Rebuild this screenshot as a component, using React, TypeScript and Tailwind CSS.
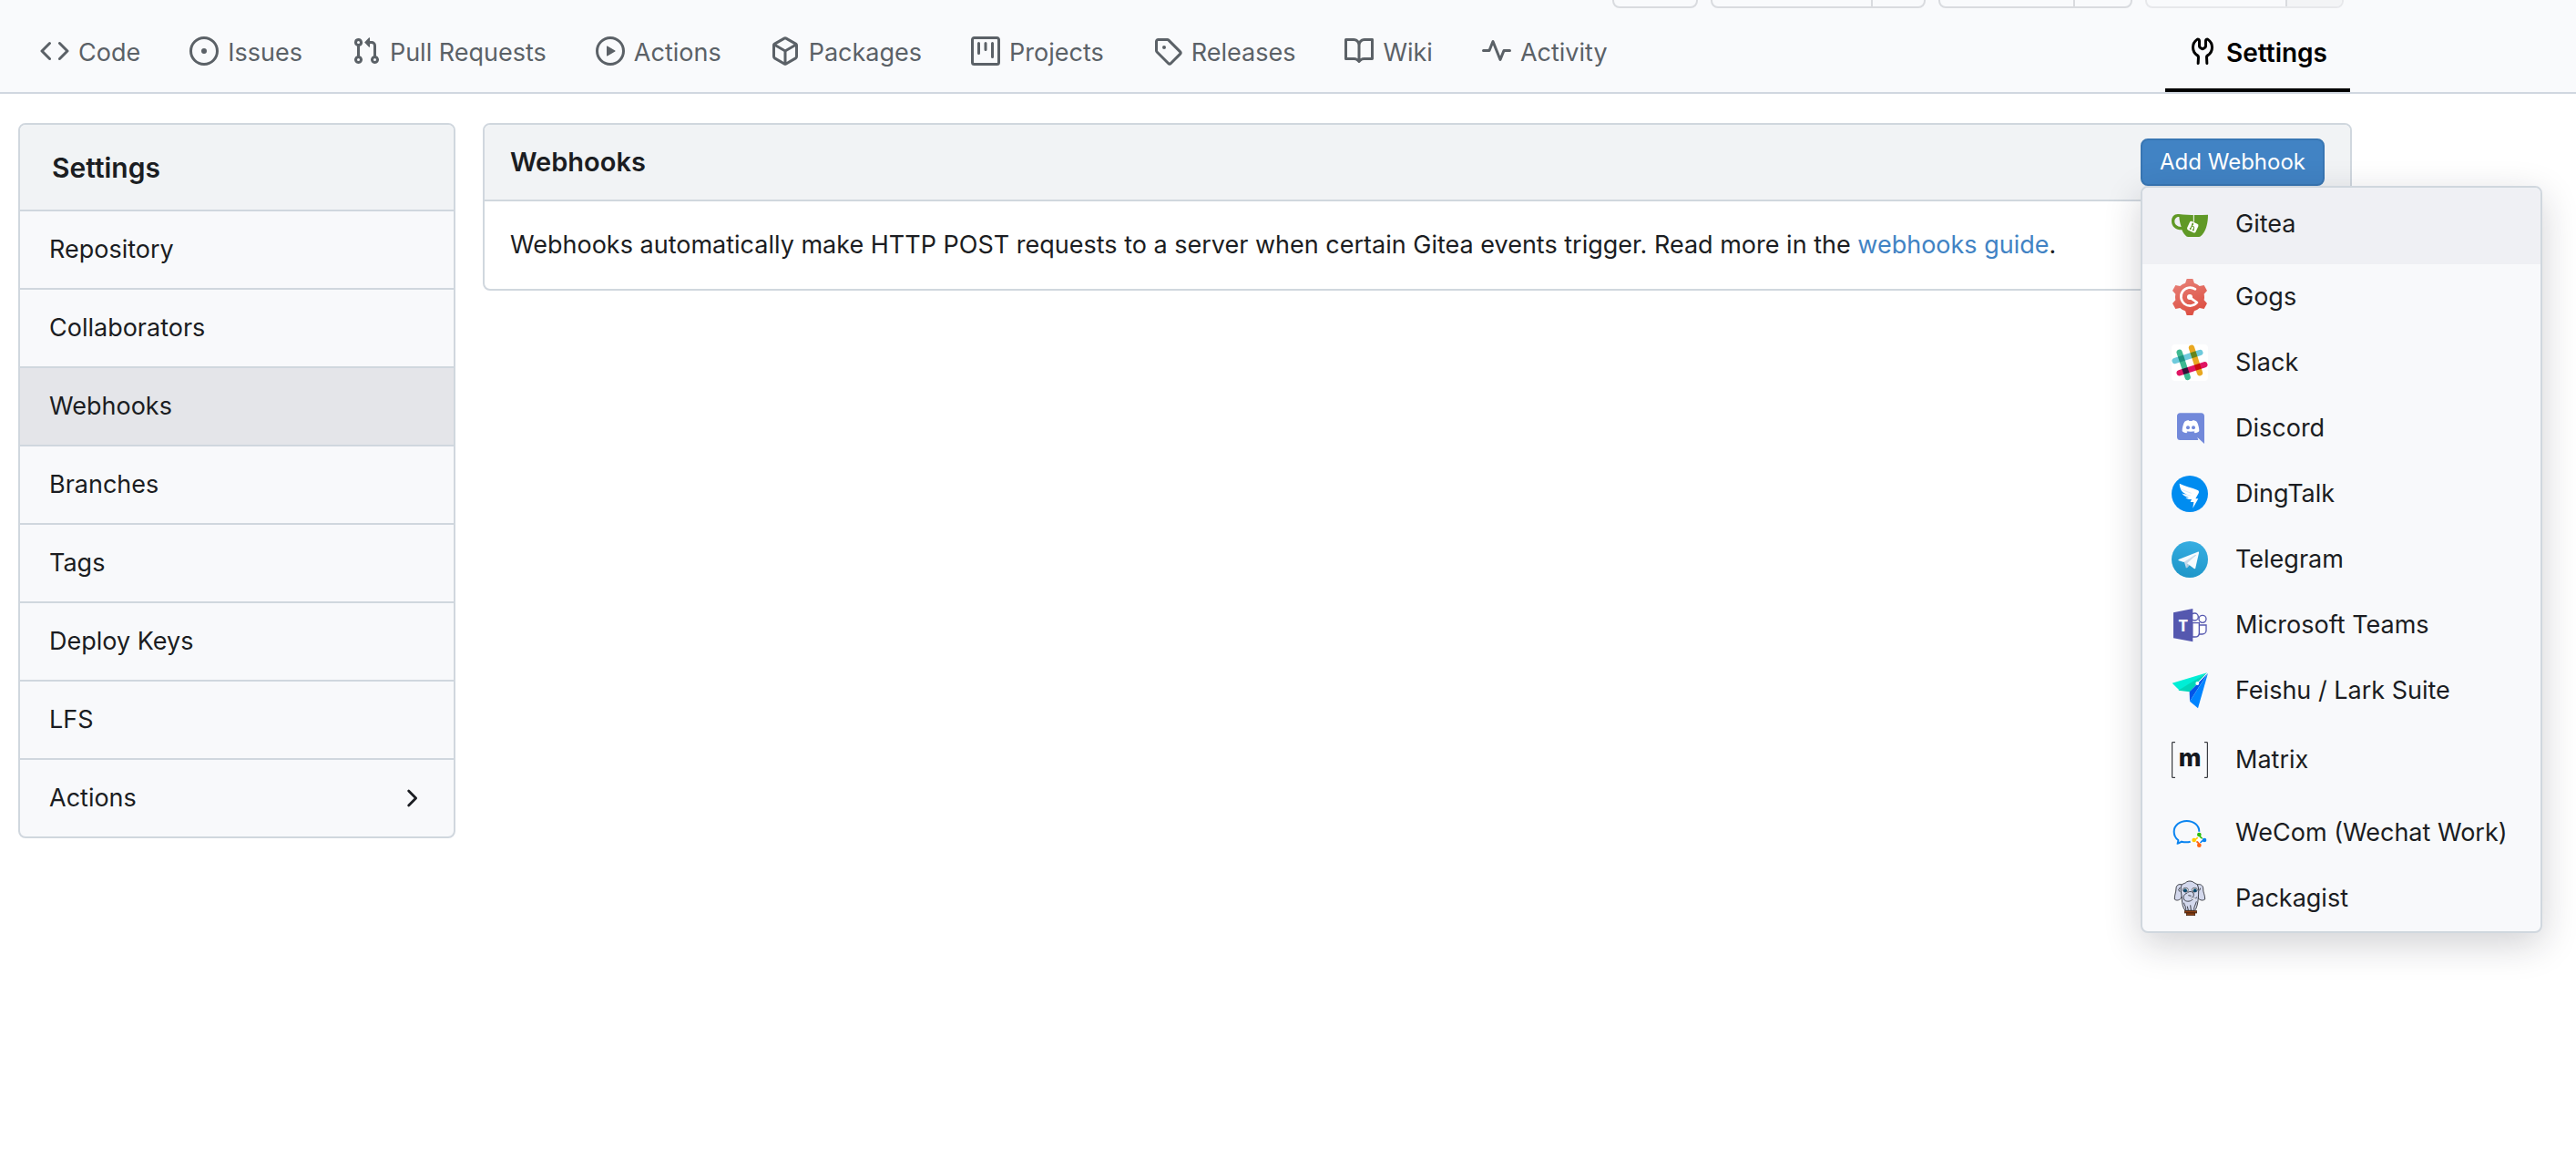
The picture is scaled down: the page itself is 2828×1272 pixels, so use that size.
import type { ReactNode } from "react";

const tabs: { label: string; path: string }[] = [
  {
    label: "Code",
    path: "m11.28 3.22 4.25 4.25a.75.75 0 0 1 0 1.06l-4.25 4.25a.749.749 0 0 1-1.275-.326.749.749 0 0 1 .215-.734L13.94 8l-3.72-3.72a.749.749 0 0 1 .326-1.275.749.749 0 0 1 .734.215Zm-6.56 0a.751.751 0 0 1 1.042.018.751.751 0 0 1 .018 1.042L2.06 8l3.72 3.72a.749.749 0 0 1-.326 1.275.749.749 0 0 1-.734-.215L.47 8.53a.75.75 0 0 1 0-1.06Z",
  },
  {
    label: "Issues",
    path: "M8 9.5a1.5 1.5 0 1 0 0-3 1.5 1.5 0 0 0 0 3Z M8 0a8 8 0 1 1 0 16A8 8 0 0 1 8 0ZM1.5 8a6.5 6.5 0 1 0 13 0 6.5 6.5 0 0 0-13 0Z",
  },
  {
    label: "Pull Requests",
    path: "M1.5 3.25a2.25 2.25 0 1 1 3 2.122v5.256a2.251 2.251 0 1 1-1.5 0V5.372A2.25 2.25 0 0 1 1.5 3.25Zm5.677-.177L9.573.677A.25.25 0 0 1 10 .854V2.5h1A2.5 2.5 0 0 1 13.5 5v5.628a2.251 2.251 0 1 1-1.5 0V5a1 1 0 0 0-1-1h-1v1.646a.25.25 0 0 1-.427.177L7.177 3.427a.25.25 0 0 1 0-.354ZM3.75 2.5a.75.75 0 1 0 0 1.5.75.75 0 0 0 0-1.5Zm0 9.5a.75.75 0 1 0 0 1.5.75.75 0 0 0 0-1.5Zm8.25.75a.75.75 0 1 0 1.5 0 .75.75 0 0 0-1.5 0Z",
  },
  {
    label: "Actions",
    path: "M8 0a8 8 0 1 1 0 16A8 8 0 0 1 8 0ZM1.5 8a6.5 6.5 0 1 0 13 0 6.5 6.5 0 0 0-13 0Zm4.879-2.773 4.264 2.559a.25.25 0 0 1 0 .428l-4.264 2.559A.25.25 0 0 1 6 10.559V5.442a.25.25 0 0 1 .379-.215Z",
  },
  {
    label: "Packages",
    path: "m8.878.392 5.25 3.045c.54.314.872.89.872 1.514v6.098a1.75 1.75 0 0 1-.872 1.514l-5.25 3.045a1.75 1.75 0 0 1-1.756 0l-5.25-3.045A1.75 1.75 0 0 1 1 11.049V4.951c0-.624.332-1.201.872-1.514L7.122.392a1.75 1.75 0 0 1 1.756 0ZM7.875 1.69l-4.63 2.685L8 7.133l4.755-2.758-4.63-2.685a.248.248 0 0 0-.25 0ZM2.5 5.677v5.372c0 .09.047.171.125.216l4.625 2.683V8.432Zm6.25 8.271 4.625-2.683a.25.25 0 0 0 .125-.216V5.677L8.75 8.432Z",
  },
  {
    label: "Projects",
    path: "M1.75 0h12.5C15.216 0 16 .784 16 1.75v12.5A1.75 1.75 0 0 1 14.25 16H1.75A1.75 1.75 0 0 1 0 14.25V1.75C0 .784.784 0 1.75 0ZM1.5 1.75v12.5c0 .138.112.25.25.25h12.5a.25.25 0 0 0 .25-.25V1.75a.25.25 0 0 0-.25-.25H1.75a.25.25 0 0 0-.25.25ZM11.75 3a.75.75 0 0 1 .75.75v7.5a.75.75 0 0 1-1.5 0v-7.5a.75.75 0 0 1 .75-.75Zm-8.25.75a.75.75 0 0 1 1.5 0v5.5a.75.75 0 0 1-1.5 0ZM8 3a.75.75 0 0 1 .75.75v3.5a.75.75 0 0 1-1.5 0v-3.5A.75.75 0 0 1 8 3Z",
  },
  {
    label: "Releases",
    path: "M1 7.775V2.75C1 1.784 1.784 1 2.75 1h5.025c.464 0 .91.184 1.238.513l6.25 6.25a1.75 1.75 0 0 1 0 2.474l-5.026 5.026a1.75 1.75 0 0 1-2.474 0l-6.25-6.25A1.752 1.752 0 0 1 1 7.775Zm1.5 0c0 .066.026.13.073.177l6.25 6.25a.25.25 0 0 0 .354 0l5.025-5.025a.25.25 0 0 0 0-.354l-6.25-6.25a.25.25 0 0 0-.177-.073H2.75a.25.25 0 0 0-.25.25ZM6 5a1 1 0 1 1 0 2 1 1 0 0 1 0-2Z",
  },
  {
    label: "Wiki",
    path: "M0 1.75A.75.75 0 0 1 .75 1h4.253c1.227 0 2.317.59 3 1.501A3.743 3.743 0 0 1 11.006 1h4.245a.75.75 0 0 1 .75.75v10.5a.75.75 0 0 1-.75.75h-4.507a2.25 2.25 0 0 0-1.591.659l-.622.621a.75.75 0 0 1-1.06 0l-.622-.621A2.25 2.25 0 0 0 5.258 13H.75a.75.75 0 0 1-.75-.75Zm7.251 10.324.004-5.073-.002-2.253A2.25 2.25 0 0 0 5.003 2.5H1.5v9h3.757a3.75 3.75 0 0 1 1.994.574ZM8.755 4.75l-.004 7.322a3.752 3.752 0 0 1 1.992-.572H14.5v-9h-3.495a2.25 2.25 0 0 0-2.25 2.25Z",
  },
  {
    label: "Activity",
    path: "M6 2c.306 0 .582.187.696.471L10 10.731l1.304-3.26A.751.751 0 0 1 12 7h3.25a.75.75 0 0 1 0 1.5h-2.742l-1.812 4.528a.751.751 0 0 1-1.392 0L6 4.77 4.696 8.03A.75.75 0 0 1 4 8.5H.75a.75.75 0 0 1 0-1.5h2.742l1.812-4.529A.751.751 0 0 1 6 2Z",
  },
];

const toolsPath =
  "M5.433 2.304A4.492 4.492 0 0 0 3.5 6c0 1.598.832 3.002 2.09 3.802.518.328.929.923.902 1.64v.008l-.164 3.337a.75.75 0 1 1-1.498-.073l.163-3.33c.002-.085-.05-.216-.207-.316A5.996 5.996 0 0 1 2 6a5.993 5.993 0 0 1 2.567-4.92 1.482 1.482 0 0 1 1.673-.04c.462.296.76.827.76 1.423v2.82c0 .082.041.16.11.206l.75.51a.25.25 0 0 0 .28 0l.75-.51A.249.249 0 0 0 9 5.282V2.463c0-.596.298-1.127.76-1.423a1.482 1.482 0 0 1 1.673.04A5.993 5.993 0 0 1 14 6a5.996 5.996 0 0 1-2.786 5.068c-.157.1-.209.23-.207.315l.163 3.33a.752.752 0 0 1-1.094.714.75.75 0 0 1-.404-.64l-.164-3.345c-.027-.717.384-1.312.902-1.64A4.495 4.495 0 0 0 12.5 6a4.492 4.492 0 0 0-1.933-3.696c-.024.017-.067.067-.067.159v2.82a1.75 1.75 0 0 1-.767 1.448l-.75.51a1.75 1.75 0 0 1-1.966 0l-.75-.51A1.75 1.75 0 0 1 5.5 5.283V2.463c0-.092-.043-.142-.067-.159Z";

const chevronPath =
  "M6.22 3.22a.75.75 0 0 1 1.06 0l4.25 4.25a.75.75 0 0 1 0 1.06l-4.25 4.25a.751.751 0 0 1-1.042-.018.751.751 0 0 1-.018-1.042L9.94 8 6.22 4.28a.75.75 0 0 1 0-1.06Z";

function Octicon({ path, className }: { path: string; className: string }) {
  return (
    <svg viewBox="0 0 16 16" fill="currentColor" className={className} aria-hidden="true">
      <path d={path} />
    </svg>
  );
}

function Brand({ children }: { children: ReactNode }) {
  return (
    <svg viewBox="0 0 120 120" className="size-10 shrink-0" aria-hidden="true">
      {children}
    </svg>
  );
}

const gearTeeth = [0, 60, 120, 180, 240, 300];

const hooks: { label: string; tall?: boolean; active?: boolean; icon: ReactNode }[] = [
  {
    label: "Gitea",
    tall: true,
    active: true,
    icon: (
      <Brand>
        <path
          fill="#609926"
          fillRule="evenodd"
          d="M24 27C10 25 0 34 0 50c0 18 14 29 34 29 5 12 13 22 20 23h36c5 0 10-5 14-11 10-14 16-35 16-62-30 2-66 2-96-2Zm1 9c1 12 3 22 7 33C18 68 10 61 10 51c0-9 6-15 15-15Z"
        />
        <path d="M73 29v24" stroke="#fff" strokeWidth="3" />
        <g transform="rotate(25 70 70)">
          <rect x="54" y="54" width="31" height="31" rx="6" fill="#fff" />
          <path d="M65 57v23M65 68c10-2 10 0 10 12" stroke="#609926" strokeWidth="3" fill="none" />
          <circle cx="65" cy="62" r="3" fill="#609926" />
          <circle cx="65" cy="78" r="3" fill="#609926" />
          <circle cx="75" cy="78" r="3" fill="#609926" />
        </g>
      </Brand>
    ),
  },
  {
    label: "Gogs",
    icon: (
      <Brand>
        <defs>
          <linearGradient id="gogs" x1="0" y1="0" x2="0.4" y2="1">
            <stop offset="0" stopColor="#e8857c" />
            <stop offset="1" stopColor="#dd5144" />
          </linearGradient>
          <clipPath id="gear">
            <circle cx="60" cy="60" r="48" />
            {gearTeeth.map((a) => (
              <path key={a} d="M42 24 50 0h20l8 24Z" transform={`rotate(${a} 60 60)`} />
            ))}
          </clipPath>
        </defs>
        <rect width="120" height="120" fill="url(#gogs)" clipPath="url(#gear)" />
        <path
          d="M78 34A30 30 0 1 0 84 78L60 61"
          fill="none"
          stroke="#fff"
          strokeWidth="8"
          strokeLinecap="round"
          strokeLinejoin="round"
        />
        <circle cx="60" cy="60" r="9" fill="#fff" />
      </Brand>
    ),
  },
  {
    label: "Slack",
    icon: (
      <Brand>
        <g className="isolate" strokeWidth="19" strokeLinecap="round">
          <rect width="120" height="120" rx="12" fill="#fff" />
          <path className="mix-blend-multiply" d="M26 26 53 108" stroke="#3eb991" />
          <path className="mix-blend-multiply" d="M66 11 93 94" stroke="#e9a820" />
          <path className="mix-blend-multiply" d="M11 54 94 27" stroke="#6ecadc" />
          <path className="mix-blend-multiply" d="M26 94 109 67" stroke="#e01563" />
        </g>
      </Brand>
    ),
  },
  {
    label: "Discord",
    icon: (
      <Brand>
        <path fill="#7289da" d="M28 10h70c6 0 10 4 10 10v91L85 90l3 9H28c-6 0-10-4-10-10V20c0-6 4-10 10-10Z" />
        <path
          fill="#fff"
          d="M43 38c5-3 10-4 14-4l1 2h10l1-2c4 0 9 1 14 4 5 9 8 20 8 31-3 4-8 6-14 7l-4-5 5-3c-9 4-21 4-30 0l5 3-4 5c-6-1-11-3-14-7 0-11 3-22 8-31Z"
        />
        <ellipse cx="54" cy="58" rx="6" ry="6" fill="#7289da" />
        <ellipse cx="72" cy="58" rx="6" ry="6" fill="#7289da" />
      </Brand>
    ),
  },
  {
    label: "DingTalk",
    icon: (
      <Brand>
        <circle cx="60" cy="60" r="60" fill="#008cf0" />
        <path
          fill="#fff"
          d="M26 26c18 9 40 13 60 22 4 2 5 5 3 10L79 76h9L70 107l3-20H62l4-9c-8 1-16-1-20-6 4 1 8 1 11 0-11-2-19-6-23-14 5 3 11 4 17 4-12-4-20-11-22-20-2-6-3-11-3-16Z"
        />
        <path d="m33 46 32 12M38 61l24 5" stroke="#c4e3fc" strokeWidth="2" />
      </Brand>
    ),
  },
  {
    label: "Telegram",
    icon: (
      <Brand>
        <defs>
          <linearGradient id="telegram" x1="0.6" y1="0" x2="0.4" y2="1">
            <stop offset="0" stopColor="#37aee2" />
            <stop offset="1" stopColor="#1e96c8" />
          </linearGradient>
        </defs>
        <circle cx="60" cy="60" r="60" fill="url(#telegram)" />
        <path fill="#c8daea" d="M49 88c-2 0-2-1-2-3l-6-19 42-25Z" />
        <path fill="#a9c9dd" d="M49 88c2 0 2-1 4-2l7-8-9-5Z" />
        <path
          fill="#f6fbfe"
          d="m51 73 23 17c3 1 5 1 5-3l11-48c1-4-2-5-4-4L25 59c-4 2-4 4-1 5l16 5 37-23c2-1 3-1 2 1Z"
        />
      </Brand>
    ),
  },
  {
    label: "Microsoft Teams",
    icon: (
      <Brand>
        <g fill="#fff" stroke="#5558af" strokeWidth="4">
          <circle cx="76" cy="33" r="12" />
          <circle cx="102" cy="40" r="12" />
          <path d="M91 60h23v18c0 7-6 12-13 12H91Z" />
          <path d="M68 53h23v33c0 8-6 13-14 13h-9Z" />
        </g>
        <path fill="#5558af" d="M6 19 70 6v109L6 103Z" />
        <text x="38" y="81" textAnchor="middle" fontFamily="Open Sans, sans-serif" fontWeight="700" fontSize="54" fill="#fff">
          T
        </text>
      </Brand>
    ),
  },
  {
    label: "Feishu / Lark Suite",
    icon: (
      <Brand>
        <path fill="#00eed6" d="M2 35 117 1 27 60Z" />
        <path fill="#00d6b9" d="M22 59 117 1 60 64Z" />
        <path fill="#0056e8" d="M59 64 119 3 60 95Z" />
        <path fill="#0084ff" d="M120 2 87 118 60 95Z" />
        <path d="m86 34 29-29" stroke="#fff" strokeWidth="3" />
        <circle cx="85" cy="36" r="6" fill="#fff" />
      </Brand>
    ),
  },
  {
    label: "Matrix",
    tall: true,
    icon: (
      <Brand>
        <path d="M12 2H2v116h10M108 2h10v116h-10" fill="none" stroke="#15181d" strokeWidth="3" />
        <text x="60" y="82" textAnchor="middle" fontFamily="Inter, sans-serif" fontWeight="800" fontSize="80" fill="#15181d">
          m
        </text>
      </Brand>
    ),
  },
  {
    label: "WeCom (Wechat Work)",
    icon: (
      <Brand>
        <path
          d="M91 56C91 36 73 21 50 21S8 36 8 56c0 13 6 22 14 28 1 3-2 8-2 11 4 0 9-4 13-6 8 2 18 3 29 0"
          fill="none"
          stroke="#0a84f0"
          strokeWidth="6"
        />
        <path d="M91 66 108 84 91 101 74 84Z" fill="#fff" />
        <path d="M91 66q3 10 10 13" stroke="#2dbe0f" strokeWidth="5" fill="none" />
        <path d="M108 84q-10 2-13 9" stroke="#0a84f0" strokeWidth="5" fill="none" />
        <path d="M91 101q-2-10-9-12" stroke="#ff6512" strokeWidth="5" fill="none" />
        <path d="M74 84q9-2 12-9" stroke="#ffcb00" strokeWidth="5" fill="none" />
        <circle cx="91" cy="66" r="7" fill="#2dbe0f" />
        <circle cx="108" cy="84" r="7" fill="#0a84f0" />
        <circle cx="91" cy="101" r="7" fill="#ff6512" />
        <circle cx="74" cy="84" r="7" fill="#ffcb00" />
      </Brand>
    ),
  },
  {
    label: "Packagist",
    icon: (
      <Brand>
        <g fill="#d3d8ec" stroke="#24262d" strokeWidth="2.5" strokeLinejoin="round">
          <path d="M34 15C24 11 15 17 15 27c0 13-6 23-5 36 6 5 14 4 21-3l9-22Z" />
          <path d="M84 15c10-4 20 2 20 12-1 13 7 22 6 36-7 5-15 4-22-3l-8-22Z" />
          <path d="M34 14c6-3 12-4 15-8 6-4 16-4 22 0 4 4 9 5 14 8 6 13 4 27 3 43-1 20-6 38-12 43H45c-7-8-11-22-11-40-1-16-7-32 0-46Z" />
        </g>
        <ellipse cx="46" cy="32" rx="9" ry="7" fill="#fff" stroke="#24262d" strokeWidth="2" />
        <ellipse cx="76" cy="32" rx="9" ry="7" fill="#fff" stroke="#24262d" strokeWidth="2" />
        <circle cx="45" cy="34" r="6" fill="#0c4a6e" />
        <circle cx="77" cy="34" r="6" fill="#0c4a6e" />
        <path
          d="M53 40c8-4 14-3 19 2 3 9-1 17-8 17M52 42c-12 3-16 16-9 24 7 6 22 4 26-3 3-4 9 0 15-7M40 74c3 9 8 14 7 24M82 70c-3 12-9 18-8 28M52 86l3 13M62 82l2 17M55 50l10 2M28 24l-5 8 4 6M95 26l-3 8"
          fill="none"
          stroke="#24262d"
          strokeWidth="2.5"
        />
        <path d="M64 56c5 5 9 7 15 6" stroke="#fff" strokeWidth="3" fill="none" />
        <rect x="43" y="101" width="40" height="7" fill="#8a3f12" stroke="#3a1c0a" strokeWidth="2" />
        <rect x="49" y="108" width="28" height="8" fill="#8a3f12" stroke="#3a1c0a" strokeWidth="2" />
      </Brand>
    ),
  },
];

const sections = ["Repository", "Collaborators", "Webhooks", "Branches", "Tags", "Deploy Keys", "LFS", "Actions"];

export default function App() {
  return (
    <div className="min-h-screen bg-white font-['Inter',sans-serif] text-[27px] leading-9 text-[#1b1d22]">
      <header className="border-b-2 border-[#d0d7e0] bg-[#f9fafc]">
        <div className="flex h-[9px] items-end justify-end gap-[14px] overflow-hidden pr-[255px]">
          <button aria-label="RSS feed" className="h-14 w-[94px] shrink-0 rounded-lg border-2 border-[#d9dbdf]" />
          <div className="flex h-14 shrink-0 rounded-lg border-2 border-[#d9dbdf]">
            <button aria-label="Watch" className="w-[176px] border-r-2 border-[#d9dbdf]" />
            <button aria-label="Watchers" className="w-14" />
          </div>
          <div className="flex h-14 shrink-0 rounded-lg border-2 border-[#d9dbdf]">
            <button aria-label="Star" className="w-[148px] border-r-2 border-[#d9dbdf]" />
            <button aria-label="Stars" className="w-[61px]" />
          </div>
          <div className="flex h-14 shrink-0 overflow-hidden rounded-lg border-2 border-[#e7e8eb]">
            <button aria-label="Fork" className="w-[154px] border-r-2 border-[#d9dbdf]" />
            <button aria-label="Forks" className="w-[60px] bg-[#f3f4f6]" />
          </div>
        </div>
        <nav aria-label="Repository" className="flex justify-between pr-[248px] pl-[17px]">
          <div className="flex">
            {tabs.map((t) => (
              <a
                key={t.label}
                href="#"
                className="flex h-[92px] items-center gap-[10px] border-b-4 border-transparent px-[27px] pt-[10px] whitespace-nowrap text-[#5b6167]"
              >
                <Octicon path={t.path} className="mb-1 size-8 shrink-0" />
                {t.label}
              </a>
            ))}
          </div>
          <a
            href="#"
            aria-current="page"
            className="flex h-[92px] items-center gap-[10px] border-b-4 border-black px-[25px] pt-[10px] text-[28px] font-semibold text-black"
          >
            <Octicon path={toolsPath} className="mb-1 size-8 shrink-0" />
            Settings
          </a>
        </nav>
      </header>

      <main className="flex items-start gap-[30px] pt-8 pr-[246px] pl-5">
        <nav
          aria-label="Settings"
          className="w-[480px] shrink-0 overflow-hidden rounded-lg border-2 border-[#d0d7de] bg-[#f8f9fb]"
        >
          <h2 className="flex h-[93px] items-center bg-[#f1f3f5] px-[35px] text-[30px] font-semibold">Settings</h2>
          {sections.map((s) => (
            <a
              key={s}
              href="#"
              className={
                s === "Webhooks"
                  ? "flex h-[86px] items-center justify-between border-t-2 border-[#d0d7de] bg-[#e4e5e9] px-8"
                  : "flex h-[86px] items-center justify-between border-t-2 border-[#d0d7de] px-8"
              }
            >
              {s}
              {s === "Actions" && <Octicon path={chevronPath} className="size-[30px]" />}
            </a>
          ))}
        </nav>

        <section className="min-w-0 flex-1 rounded-lg border-2 border-[#d0d7de] bg-white">
          <div className="flex h-[84px] items-center justify-between rounded-t-md border-b-2 border-[#d0d7de] bg-[#f1f3f5] px-7">
            <h1 className="text-[29px] font-semibold">Webhooks</h1>
            <div className="relative">
              <button
                aria-haspopup="menu"
                aria-expanded="true"
                className="flex h-[52px] w-[202px] items-center justify-center rounded-lg border-2 border-[#3876b3] bg-[#4183c4] text-[24px] whitespace-nowrap text-white"
              >
                Add Webhook
              </button>
              <div
                role="menu"
                className="absolute top-full left-0 z-10 w-[441px] overflow-hidden rounded-lg border-2 border-[#d0d7de] bg-[#f8f9fb] shadow-[0_12px_40px_rgba(24,26,40,0.2)]"
              >
                {hooks.map((h) => (
                  <a
                    key={h.label}
                    href="#"
                    role="menuitem"
                    className={
                      h.active
                        ? "flex h-[84px] items-center gap-[30px] bg-[#eff0f4] pb-1 pl-8 whitespace-nowrap"
                        : h.tall
                          ? "flex h-[84px] items-center gap-[30px] pb-1 pl-8 whitespace-nowrap"
                          : "flex h-[72px] items-center gap-[30px] pl-8 whitespace-nowrap"
                    }
                  >
                    {h.icon}
                    {h.label}
                  </a>
                ))}
              </div>
            </div>
          </div>
          <p className="px-7 py-[30px]">
            Webhooks automatically make HTTP POST requests to a server when certain Gitea events trigger. Read more in the{" "}
            <a href="#" className="text-[#4183c4]">
              webhooks guide
            </a>
            .
          </p>
        </section>
      </main>
    </div>
  );
}
